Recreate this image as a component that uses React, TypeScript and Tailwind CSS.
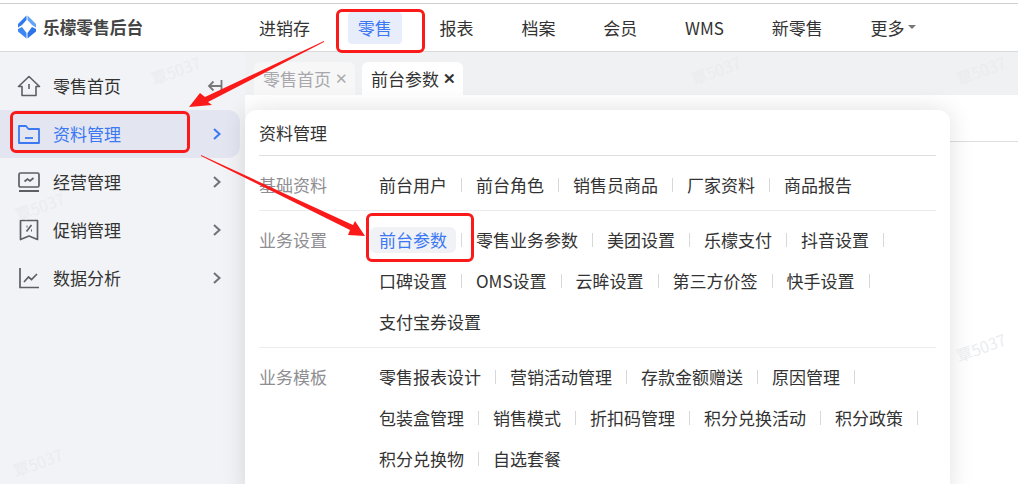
const cjk = { fontFamily: '"Noto Sans CJK SC", "Liberation Sans", sans-serif' };

const navItems = ['进销存', '零售', '报表', '档案', '会员', 'WMS', '新零售', '更多'];

const groups = [
  { title: '基础资料', items: ['前台用户', '前台角色', '销售员商品', '厂家资料', '商品报告'] },
  {
    title: '业务设置',
    items: ['前台参数', '零售业务参数', '美团设置', '乐檬支付', '抖音设置', '口碑设置', 'OMS设置', '云眸设置', '第三方价签', '快手设置', '支付宝券设置'],
  },
  {
    title: '业务模板',
    items: ['零售报表设计', '营销活动管理', '存款金额赠送', '原因管理', '包装盒管理', '销售模式', '折扣码管理', '积分兑换活动', '积分政策', '积分兑换物', '自选套餐'],
  },
];

const noSep = ['商品报告', '支付宝券设置', '自选套餐'];

function Chevron({ active }: { active?: boolean }) {
  return (
    <svg width="10" height="14" viewBox="0 0 10 14" fill="none" stroke={active ? '#3b78f2' : '#6f7278'} strokeWidth="2">
      <path d="M2 2l5.5 5L2 12" />
    </svg>
  );
}

function HomeIcon() {
  return (
    <svg width="24" height="24" viewBox="0 0 24 24" fill="none" stroke="#5c5f66" strokeWidth="1.6">
      <path d="M1.5 12.5L12 2.500l10.5 10h-3.5v9H5v-9z" strokeLinejoin="round" />
      <path d="M12 10v5" />
    </svg>
  );
}

function FolderIcon() {
  return (
    <svg width="24" height="24" viewBox="0 0 24 24" fill="none" stroke="#3b78f2" strokeWidth="1.8">
      <path d="M2 4h7l2.500 3H22v14H2z" strokeLinejoin="round" />
      <path d="M8 16h8" />
    </svg>
  );
}

function ScreenIcon() {
  return (
    <svg width="24" height="24" viewBox="0 0 24 24" fill="none" stroke="#5c5f66" strokeWidth="1.7">
      <rect x="2" y="3" width="20" height="14" rx="1.500" />
      <path d="M7.500 11.500l3-2.500 2.500 2 3.500-3" />
      <path d="M2 21h20" strokeWidth="2" />
    </svg>
  );
}

function CouponIcon() {
  return (
    <svg width="24" height="24" viewBox="0 0 24 24" fill="none" stroke="#5c5f66" strokeWidth="1.7">
      <path d="M3.500 2.500h17v19L12 18l-8.500 3.500z" strokeLinejoin="round" />
      <path d="M9.500 13.500l5-6.500" />
      <path d="M9.500 8.500h1M14 12.500h1" strokeWidth="2" />
    </svg>
  );
}

function ChartIcon() {
  return (
    <svg width="24" height="24" viewBox="0 0 24 24" fill="none" stroke="#5c5f66" strokeWidth="1.7">
      <path d="M3 2v19.500h19" />
      <path d="M7 16l4.500-5 3 2.500L20 8" />
    </svg>
  );
}

const sideItems = [
  { label: '零售首页', icon: <HomeIcon /> },
  { label: '资料管理', icon: <FolderIcon />, active: true },
  { label: '经营管理', icon: <ScreenIcon /> },
  { label: '促销管理', icon: <CouponIcon /> },
  { label: '数据分析', icon: <ChartIcon /> },
];

function Watermark({ className }: { className: string }) {
  return (
    <div className={`absolute -rotate-[20deg] whitespace-nowrap text-[16px] text-[#ebecef] pointer-events-none ${className}`}>覃5037</div>
  );
}

function Logo() {
  return (
    <svg width="18" height="24" viewBox="0 0 18 24">
      <path d="M8.500 0.500L0 9v3.500L4 10l4.500-5z" fill="#2f7bec" />
      <path d="M9.500 0.500L18 9v3.500L14 10 9.500 5z" fill="#62a4f6" />
      <path d="M0 14v2.500L8.500 23.500V18L4 12z" fill="#3b86f0" />
      <path d="M18 14v2.500L9.500 23.500V18L14 12z" fill="#2f74e6" />
    </svg>
  );
}

export default function App() {
  return (
    <div className="relative h-[484px] w-[1018px] overflow-hidden bg-white text-[17px] text-[#333]" style={cjk}>
      <div className="h-[3px] bg-white border-b border-[#cfcfd2] box-content" />
      <header className="flex h-[48px] items-center border-b border-[#d9d9db] bg-white">
        <div className="flex w-[249px] items-center pl-[18px]">
          <Logo />
          <span className="ml-[7px] text-[16.700px] font-bold text-[#444]">乐檬零售后台</span>
        </div>
        <nav className="flex items-center gap-[27.800px]">
          {navItems.map((item) => (
            <div
              key={item}
              className={`flex h-[32px] items-center rounded px-[10px] ${item === '零售' ? 'bg-[#e7edfb] text-[#3b78f2]' : ''}`}
            >
              {item}
              {item === '更多' && <span className="ml-[4px] mb-[1px] border-x-[4px] border-t-[4px] border-x-transparent border-t-[#777]" />}
            </div>
          ))}
        </nav>
      </header>

      <div className="flex h-[432px]">
        <aside className="w-[245px] shrink-0 bg-[#f2f3f6] pt-[10px] pr-[5px]">
          {sideItems.map((s) => (
            <div
              key={s.label}
              className={`flex h-[48px] items-center rounded-r-xl pl-[17px] ${s.active ? 'bg-[#e3e6f1] text-[#3b78f2]' : ''}`}
            >
              <span className="flex w-[24px] justify-center">{s.icon}</span>
              <span className="ml-[12px] flex-1">{s.label}</span>
              {s.label === '零售首页' ? (
                <span className="mr-[17px] text-[#777]">
                  <svg width="16" height="14" viewBox="0 0 16 14" fill="none" stroke="#777" strokeWidth="1.800">
                    <path d="M14.500 1v12M14.500 7H2M6.500 2.500L2 7l4.500 4.500" />
                  </svg>
                </span>
              ) : (
                <span className="mr-[18px] flex">
                  <Chevron active={s.active} />
                </span>
              )}
            </div>
          ))}
        </aside>

        <main className="flex flex-1 flex-col">
          <div className="flex h-[43px] items-end gap-[7px] bg-[#f0f1f3] pl-[9px]">
            <div className="flex h-[33px] w-[101px] items-center justify-center rounded-t-md bg-[#f7f7f8] pl-[2px] text-[#a8a8ac]">
              零售首页<span className="ml-[4px] text-[15px] text-[#aaa]">✕</span>
            </div>
            <div className="flex h-[33px] w-[101px] items-center justify-center rounded-t-md bg-white pl-[2px]">
              前台参数<span className="ml-[4px] text-[15px] font-bold">✕</span>
            </div>
          </div>
          <div className="h-[47px] border-b border-[#dedee0] bg-white" />
        </main>
      </div>

      {/* popover panel */}
      <div className="absolute left-[245px] top-[110px] h-[390px] w-[705px] rounded-xl bg-white px-[14px] shadow-[0_0_24px_rgba(0,0,0,0.12)]">
        <div className="flex h-[46px] items-center border-b border-[#dedee0]">资料管理</div>
        {groups.map((g, i) => (
          <div key={g.title} className={`flex pt-[8px] ${i < 2 ? 'border-b border-[#ececee] pb-[5px]' : ''}`}>
            <div className="flex h-[41px] w-[120px] shrink-0 items-center text-[#8e8e92]">{g.title}</div>
            <div className="flex flex-1 flex-wrap">
              {g.items.map((item) => (
                <div key={item} className="flex h-[41px] items-center">
                  <span
                    className={
                      item === '前台参数'
                        ? '-mx-[9px] flex h-[26px] items-center rounded-md bg-[#f0f2f6] px-[9px] text-[#3b78f2]'
                        : ''
                    }
                  >
                    {item}
                  </span>
                  {!noSep.includes(item) && <span className="mx-[14px] h-[14px] w-px bg-[#d8d8da]" />}
                </div>
              ))}
            </div>
          </div>
        ))}
      </div>

      <Watermark className="left-[150px] top-[58px]" />
      <Watermark className="left-[14px] top-[194px]" />
      <Watermark className="left-[690px] top-[58px]" />
      <Watermark className="left-[955px] top-[58px]" />
      <Watermark className="left-[955px] top-[335px]" />
      <Watermark className="left-[12px] top-[450px]" />

      {/* red annotations */}
      <div className="absolute left-[336px] top-[9px] h-[44px] w-[89px] rounded-md border-[3px] border-[#fb1a1a]" />
      <div className="absolute left-[10px] top-[111px] h-[42px] w-[180px] rounded-md border-[3px] border-[#fb1a1a]" />
      <div className="absolute left-[366px] top-[213px] h-[49px] w-[108px] rounded-md border-[3px] border-[#fb1a1a]" />
      <svg className="absolute left-0 top-0" width="1018" height="484">
        <path d="M324 41L205 97 200 93 189 107 212 105 208 102 324 42z" fill="#fb1a1a" />
        <path d="M201 155L353 225 355 221 365 236 348 235 350 230 201 156z" fill="#fb1a1a" />
      </svg>
    </div>
  );
}
